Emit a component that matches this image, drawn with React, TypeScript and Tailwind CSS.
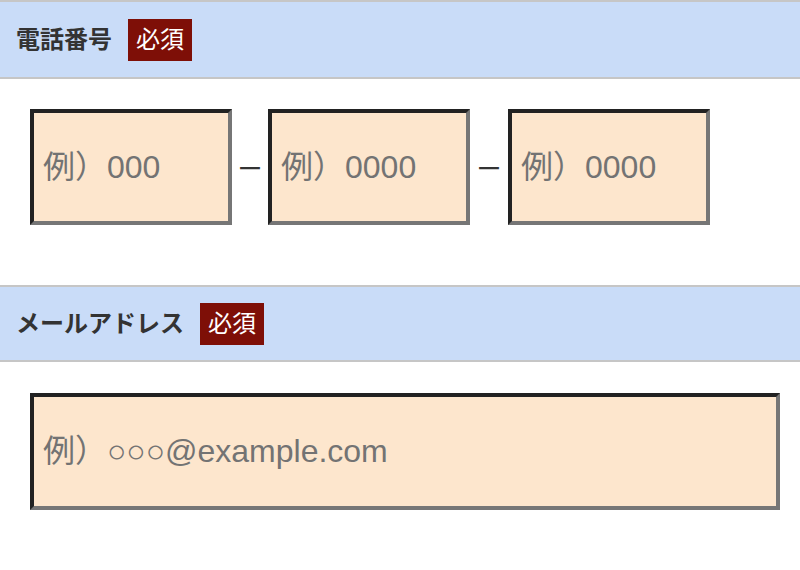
import React from "react";

function Header({ title }: { title: string }) {
  return (
    <div className="flex items-center border-y-2 border-[#c6c6c6] bg-[#c9dcf8] pl-4">
      <span className="text-[24px] font-bold leading-none text-[#333333]">{title}</span>
      <span className="ml-4 flex h-[42px] w-[64px] items-center justify-center bg-[#7e0f07] text-[24px] leading-none text-white">
        必須
      </span>
    </div>
  );
}

const inputCls =
  "h-[116px] border-4 border-t-[#222222] border-l-[#222222] border-b-[#767676] border-r-[#767676] bg-[#fde6cd] px-[9px] text-[32px] text-[#333] outline-none placeholder:text-[#737373]";

export default function App() {
  return (
    <div
      className="min-h-[570px] w-[800px] bg-white"
      style={{ fontFamily: '"Liberation Sans", "Noto Sans CJK JP", sans-serif' }}
    >
      <div className="h-[79px] [&>div]:h-[79px]">
        <Header title="電話番号" />
      </div>
      <div className="flex items-center pl-[30px] pt-[30px] pb-[60px]">
        <input className={inputCls + " w-[202px]"} placeholder="例）000" />
        <span className="w-[36px] text-center text-[25px] leading-none text-[#333]" style={{ fontFamily: '"Noto Sans CJK JP", sans-serif' }}>
          ー
        </span>
        <input className={inputCls + " w-[202px]"} placeholder="例）0000" />
        <span className="w-[38px] text-center text-[25px] leading-none text-[#333]" style={{ fontFamily: '"Noto Sans CJK JP", sans-serif' }}>
          ー
        </span>
        <input className={inputCls + " w-[202px]"} placeholder="例）0000" />
      </div>
      <div className="h-[77px] [&>div]:h-[77px]">
        <Header title="メールアドレス" />
      </div>
      <div className="pl-[30px] pt-[31px]">
        <input className={inputCls + " h-[117px] w-[750px]"} placeholder="例）○○○@example.com" />
      </div>
    </div>
  );
}
